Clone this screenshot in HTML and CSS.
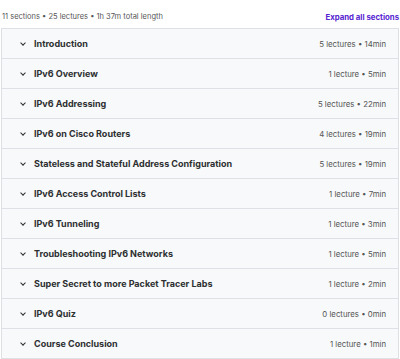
FILE: index.html
```html
<!DOCTYPE html>
<html lang="en">

<head>
  <meta charset="UTF-8">
  <title>Course content</title>
  <link rel="stylesheet" href="styles.css">
</head>

<body>
  <div class="curriculum">
    <div class="summary">
      <span>11 sections • 25 lectures • 1h 37m total length</span>
      <button class="expand">Expand all sections</button>
    </div>

    <div class="sections">
      <div class="section"><span class="chev"></span><span class="title">Introduction</span><span class="meta">5 lectures • 14min</span></div>
      <div class="section"><span class="chev"></span><span class="title">IPv6 Overview</span><span class="meta">1 lecture • 5min</span></div>
      <div class="section"><span class="chev"></span><span class="title">IPv6 Addressing</span><span class="meta">5 lectures • 22min</span></div>
      <div class="section"><span class="chev"></span><span class="title">IPv6 on Cisco Routers</span><span class="meta">4 lectures • 19min</span></div>
      <div class="section"><span class="chev"></span><span class="title">Stateless and Stateful Address Configuration</span><span class="meta">5 lectures • 19min</span></div>
      <div class="section"><span class="chev"></span><span class="title">IPv6 Access Control Lists</span><span class="meta">1 lecture • 7min</span></div>
      <div class="section"><span class="chev"></span><span class="title">IPv6 Tunneling</span><span class="meta">1 lecture • 3min</span></div>
      <div class="section"><span class="chev"></span><span class="title">Troubleshooting IPv6 Networks</span><span class="meta">1 lecture • 5min</span></div>
      <div class="section"><span class="chev"></span><span class="title">Super Secret to more Packet Tracer Labs</span><span class="meta">1 lecture • 2min</span></div>
      <div class="section"><span class="chev"></span><span class="title">IPv6 Quiz</span><span class="meta">0 lectures • 0min</span></div>
      <div class="section"><span class="chev"></span><span class="title">Course Conclusion</span><span class="meta">1 lecture • 1min</span></div>
    </div>
  </div>
</body>

</html>
```

FILE: styles.css
```css
body {
  margin: 0;
  font-family: Inter, "Noto Sans", sans-serif;
  color: #2d2f31;
  background: #fff;
}

.curriculum {
  width: 400px;
}

.summary {
  display: flex;
  align-items: center;
  justify-content: space-between;
  height: 28px;
  padding: 5px 1px 0 2px;
  box-sizing: border-box;
  font-size: 7.5px;
  color: #555;
}

.expand {
  border: 0;
  background: none;
  padding: 0;
  font-family: inherit;
  font-size: 7.8px;
  font-weight: 700;
  color: #5624d0;
}

.sections {
  margin-left: 1px;
  width: 396px;
  border: 1px solid #dde1e5;
  border-bottom: 0;
}

.section {
  display: flex;
  align-items: center;
  height: 29px;
  border-bottom: 1px solid #dde1e5;
  background: #f7f9fa;
  padding: 0 12px 0 17px;
}

.chev {
  width: 3px;
  height: 3px;
  border-right: 1px solid #2d2f31;
  border-bottom: 1px solid #2d2f31;
  transform: rotate(45deg);
  margin: 0 9px 2px 2px;
}

.title {
  flex: 1;
  font-size: 9px;
  font-weight: 700;
}

.meta {
  font-size: 7.8px;
  color: #555;
}
```
